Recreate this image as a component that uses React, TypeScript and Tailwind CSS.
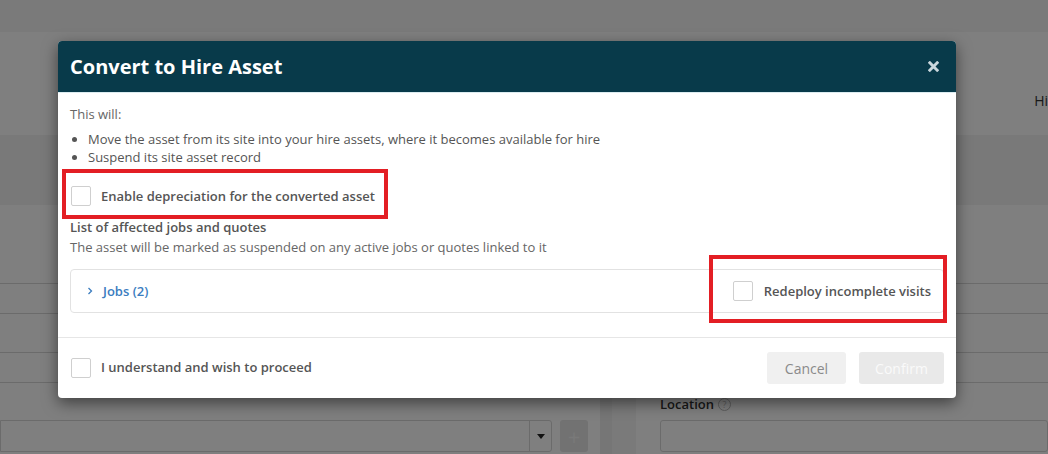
import React from 'react';

const Checkbox: React.FC = () => (
  <span className="inline-block h-5 w-5 shrink-0 rounded-[2px] border border-[#cfcfcf] bg-white" />
);

const PageBehind: React.FC = () => (
  <div className="flex h-full flex-col bg-white">
    <div className="h-8 shrink-0 bg-[#f4f4f4]" />
    <div className="flex h-[103px] shrink-0 justify-end pt-[58px]">
      <span className="whitespace-nowrap text-[14px] text-[#333]">Hi</span>
    </div>
    <div className="h-[70px] shrink-0 bg-[#f3f3f3]" />
    <div className="flex flex-1">
      {/* left column */}
      <div className="flex w-[600px] flex-col pr-[12px]">
        <div className="h-[78px]" />
        <div className="h-[31px] border-y border-[#d6d6d6]" />
        <div className="h-[38px]" />
        <div className="h-[31px] border-y border-[#d6d6d6]" />
        <div className="h-[37px]" />
        <div className="flex h-[32px] gap-2">
          <div className="flex flex-1 justify-end rounded-r-[3px] border border-[#d6d6d6]">
            <div className="flex w-[22px] items-center justify-center border-l border-[#d6d6d6]">
              <span className="h-0 w-0 border-x-[4px] border-t-[5px] border-x-transparent border-t-[#222]" />
            </div>
          </div>
          <div className="flex w-[28px] items-center justify-center rounded-[3px] bg-[#e4e4e4] text-[22px] leading-none text-[#f2f2f2]">
            +
          </div>
        </div>
      </div>
      {/* gutter */}
      <div className="flex w-[40px]">
        <div className="w-[12px] bg-[#ececec]" />
        <div className="w-[24px] bg-[#f4f4f4]" />
      </div>
      {/* right column */}
      <div className="flex flex-1 flex-col">
        <div className="h-[78px]" />
        <div className="h-[31px] border-y border-[#d6d6d6]" />
        <div className="h-[38px]" />
        <div className="h-[31px] border-y border-[#d6d6d6]" />
        <div className="flex h-[37px] items-center gap-1 pl-[20px] pt-[6px]">
          <span className="text-[13px] font-semibold text-[#333]">Location</span>
          <span className="flex h-[13px] w-[13px] items-center justify-center rounded-full border border-[#bbb] text-[9px] leading-none text-[#bbb]">
            ?
          </span>
        </div>
        <div className="ml-[20px] h-[32px] rounded-[3px] border border-[#d6d6d6]" />
      </div>
    </div>
  </div>
);

const App: React.FC = () => {
  return (
    <div className="relative h-[454px] w-[1048px] overflow-hidden font-['Open_Sans',sans-serif]">
      <PageBehind />
      <div className="absolute inset-0 bg-black/50" />

      <div className="absolute left-[58px] top-[41px] w-[898px] overflow-hidden rounded-[4px] bg-white shadow-[0_5px_15px_rgba(0,0,0,0.5)]">
        <div className="flex h-[52px] items-center justify-between border-b border-[#dcecf0] bg-[#083a4a] pl-[12px] pr-[17px]">
          <h2 className="text-[20px] font-bold text-white">Convert to Hire Asset</h2>
          <svg width="11" height="11" viewBox="0 0 12 12" className="text-[#c9d6dc]">
            <path d="M2 2 L10 10 M10 2 L2 10" stroke="currentColor" strokeWidth="3.2" strokeLinecap="square" />
          </svg>
        </div>

        <div className="px-[12px] pb-[24px] pt-[12px] text-[13px] leading-[18px] text-[#666]">
          <p>This will:</p>
          <ul className="mt-[7px] list-disc pl-[18px] text-[#555]">
            <li>Move the asset from its site into your hire assets, where it becomes available for hire</li>
            <li>Suspend its site asset record</li>
          </ul>

          <label className="mt-[20px] flex items-center gap-[10px] pl-[1px]">
            <Checkbox />
            <span className="font-semibold text-[#555]">Enable depreciation for the converted asset</span>
          </label>

          <p className="mt-[12px] font-semibold text-[#555]">List of affected jobs and quotes</p>
          <p className="mt-[2px]">The asset will be marked as suspended on any active jobs or quotes linked to it</p>

          <div className="mt-[13px] flex h-[44px] items-center justify-between rounded-[4px] border border-[#e2e2e2] pl-[16px] pr-[12px]">
            <div className="flex items-center gap-[10px] text-[#3b7dbf]">
              <svg width="6" height="8" viewBox="0 0 6 8">
                <path d="M1.5 1 L4.5 4 L1.5 7" fill="none" stroke="currentColor" strokeWidth="1.3" />
              </svg>
              <span className="font-semibold">Jobs (2)</span>
            </div>
            <label className="flex items-center gap-[11px]">
              <Checkbox />
              <span className="font-semibold text-[#555]">Redeploy incomplete visits</span>
            </label>
          </div>
        </div>

        <div className="flex h-[61px] items-center justify-between border-t border-[#e6e6e6] px-[12px]">
          <label className="flex items-center gap-[10px] pl-[1px] text-[13px]">
            <Checkbox />
            <span className="font-semibold text-[#555]">I understand and wish to proceed</span>
          </label>
          <div className="flex gap-[13px]">
            <button className="h-[32px] w-[79px] rounded-[3px] bg-[#f0f0f0] text-[14px] text-[#8a8a8a]">Cancel</button>
            <button className="h-[32px] w-[85px] rounded-[3px] bg-[#e9e9e9] text-[14px] text-[#fafafa]">Confirm</button>
          </div>
        </div>
      </div>

      {/* highlight annotations */}
      <div className="absolute left-[62px] top-[169px] h-[50px] w-[326px] border-4 border-[#e31e24]" />
      <div className="absolute left-[709px] top-[255px] h-[68px] w-[238px] border-4 border-[#e31e24]" />
    </div>
  );
};

export default App;
